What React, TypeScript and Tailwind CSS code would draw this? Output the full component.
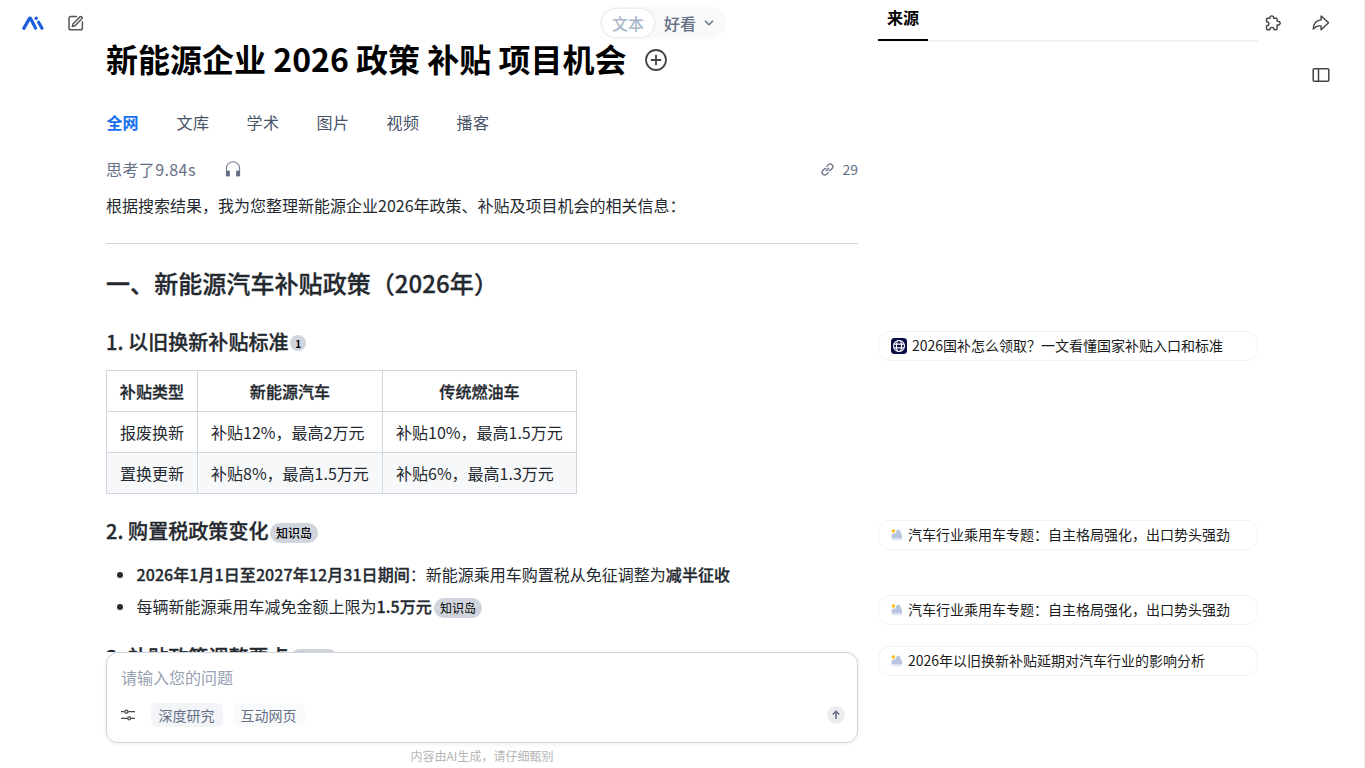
import type { ReactNode } from 'react';

const tabs = ['全网', '文库', '学术', '图片', '视频', '播客'];

const rows = [
  ['报废换新', '补贴12%，最高2万元', '补贴10%，最高1.5万元'],
  ['置换更新', '补贴8%，最高1.5万元', '补贴6%，最高1.3万元'],
];

function Logo() {
  return (
    <svg width="24" height="16" viewBox="0 0 24 16" fill="none" stroke="#1b5fdc" strokeWidth="3.2" strokeLinecap="round" strokeLinejoin="round">
      <path d="M2.8 13.4 8.4 3.6Q9 2.6 9.6 3.6L14.6 13.2" />
      <path d="M17.6 7.2 21 13.2" />
      <circle cx="15.2" cy="3.2" r="1.7" fill="#1b5fdc" stroke="none" />
    </svg>
  );
}

function ComposeIcon() {
  return (
    <svg width="16" height="16" viewBox="0 0 16 16" fill="none" stroke="#555" strokeWidth="1.5" strokeLinecap="round" strokeLinejoin="round">
      <path d="M8.5 1.5H2.8A1.8 1.8 0 0 0 1 3.3V13A1.8 1.8 0 0 0 2.8 14.8H12.6A1.8 1.8 0 0 0 14.4 13V7" />
      <path d="M4.4 11.6 5.1 8.8 12 1.9Q12.8 1.1 13.8 2T13.9 3.8L7 10.8Z" />
    </svg>
  );
}

function PlusIcon() {
  return (
    <svg width="24" height="24" viewBox="0 0 24 24" fill="none" stroke="#444" strokeWidth="1.8" strokeLinecap="round">
      <circle cx="12" cy="12" r="10" />
      <path d="M12 7.5V16.5M7.5 12H16.5" />
    </svg>
  );
}

function HeadphoneIcon() {
  return (
    <svg width="16" height="16" viewBox="0 0 16 16" fill="none">
      <path d="M1.4 12V7.4A6.6 6.6 0 0 1 14.6 7.4V12" stroke="#7c8596" strokeWidth="1.1" />
      <rect x=".9" y="9.4" width="4" height="6.2" rx="1.3" fill="#667085" />
      <rect x="11.1" y="9.4" width="4" height="6.2" rx="1.3" fill="#667085" />
    </svg>
  );
}

function LinkIcon() {
  return (
    <svg width="13" height="13" viewBox="0 0 14 14" fill="none" stroke="#667085" strokeWidth="1.4" strokeLinecap="round">
      <path d="M6.2 3.6 7.8 2A2.5 2.5 0 0 1 12 5.9L10.4 7.6A2.4 2.4 0 0 1 8.8 8.3" />
      <path d="M7.8 10.4 6.2 12A2.5 2.5 0 0 1 2 8.1L3.6 6.4A2.4 2.4 0 0 1 5.2 5.7" />
      <path d="M5.6 8.4 8.4 5.6" />
    </svg>
  );
}

function PuzzleIcon() {
  return (
    <svg width="16" height="16" viewBox="0 0 16 16" fill="none" stroke="#444" strokeWidth="1.4" strokeLinejoin="round">
      <path d="M2.6 3.2H5C4.8 1.7 5.5 .9 6.8 .9S8.8 1.7 8.6 3.2H11.2Q12.1 3.2 12.1 4.1V6.2C14 6 15.2 6.8 15.2 8.1S14 10.2 12.1 10V13.8Q12.1 14.7 11.2 14.7H9.2C9.2 13.2 8.4 12.4 7 12.4S4.8 13.2 4.8 14.7H2.6Q1.5 14.7 1.5 13.6V10.6C3.2 10.6 3.9 9.9 3.9 8.7S3.2 6.8 1.5 6.8V4.3Q1.5 3.2 2.6 3.2Z" />
    </svg>
  );
}

function ShareIcon() {
  return (
    <svg width="18" height="16" viewBox="0 0 18 16" fill="none" stroke="#444" strokeWidth="1.4" strokeLinejoin="round">
      <path d="M9.1 1 16.6 7.8 9.1 14.7V11C5.9 10.6 3.2 11.5 1.2 14.1 1.5 9 4.2 5.3 9.1 4.9Z" />
    </svg>
  );
}

function PanelIcon() {
  return (
    <svg width="18" height="14" viewBox="0 0 18 14" fill="none" stroke="#444" strokeWidth="1.5">
      <rect x="1.2" y=".8" width="15.6" height="12.4" rx="1" />
      <path d="M6.5 1V13" />
    </svg>
  );
}

function SlidersIcon() {
  return (
    <svg width="14" height="12" viewBox="0 0 14 12" fill="none" stroke="#4a4a4a" strokeWidth="1.3">
      <path d="M0 2.7H3.6M7.2 2.7H14M0 9.3H6.4M10 9.3H14" />
      <circle cx="5.4" cy="2.7" r="1.5" />
      <circle cx="8.2" cy="9.3" r="1.5" />
    </svg>
  );
}

function GlobeIcon() {
  return (
    <svg width="16" height="16" viewBox="0 0 16 16" fill="none" className="shrink-0">
      <rect width="16" height="16" rx="3.5" fill="#080d45" />
      <g stroke="#fff" strokeWidth="1.1">
        <circle cx="8" cy="8" r="5.5" />
        <ellipse cx="8" cy="8" rx="2.6" ry="5.5" />
        <path d="M2.8 6.1H13.2M2.8 9.9H13.2" />
      </g>
    </svg>
  );
}

function CloudIcon() {
  return (
    <svg width="12" height="12" viewBox="0 0 12 12" className="shrink-0">
      <circle cx="2.4" cy="2" r="1.8" fill="#fbbc1c" />
      <path d="M.6 9.6V6.4Q.6 4.6 2.4 4.4H4.4L5.6 1.6Q7.2 -.4 9 1.4L11 6.5V9.6Z" fill="#b7c5df" />
      <path d="M.8 9.6H11V11.2H.8Z" fill="#dde5f2" />
    </svg>
  );
}

function Strong({ children }: { children: ReactNode }) {
  return <b className="font-medium tracking-[0.07px] [-webkit-text-stroke:0.3px_currentColor]">{children}</b>;
}

function Badge({ children }: { children: ReactNode }) {
  return (
    <span className="flex h-5 items-center rounded-full bg-[#d0d5dd] px-1.5 text-[12px] leading-5 text-black">{children}</span>
  );
}

function SubHeading({ children }: { children: ReactNode }) {
  return <h3 className="text-[20px] leading-[30px]"><Strong>{children}</Strong></h3>;
}

function SourceCard({ icon, title, className }: { icon: ReactNode; title: string; className: string }) {
  return (
    <div className={`flex h-[30px] items-center gap-[5px] rounded-xl border border-[#f2f2f4] pl-3 text-[14px] text-[#1a1a1a] ${className}`}>
      {icon}
      <span className="whitespace-nowrap pb-0.5 leading-5">{title}</span>
    </div>
  );
}

export default function App() {
  return (
    <div className="flex h-[768px] w-[1365px] overflow-hidden border-r border-[#efefef] bg-white font-['Noto_Sans_CJK_SC',sans-serif] text-[16px] text-[#24292f]">
      <nav className="flex w-[106px] shrink-0 items-start gap-[22.5px] pl-[21px] pt-[15px]">
        <Logo />
        <ComposeIcon />
      </nav>

      <main className="flex w-[752px] shrink-0 flex-col">
        <div className="h-[652px] overflow-hidden">
          <div className="flex h-[39px] items-end pl-[494px]">
            <div className="flex h-8 w-[126px] items-center rounded-full bg-[#f9f9fa] pl-[2px] text-[#667085]">
              <span className="flex h-7 w-[52px] items-center justify-center rounded-full bg-white font-medium text-[#a9b6c9] shadow-[0_0_3px_rgba(0,0,0,0.14)]">文本</span>
              <span className="ml-[10px] font-medium">好看</span>
              <svg width="10" height="6" viewBox="0 0 10 6" fill="none" stroke="#667085" strokeWidth="1.4" className="ml-2"><path d="M1 .8 5 4.8 9 .8" /></svg>
            </div>
          </div>

          <div className="flex h-[42px] items-center gap-[17.5px]">
            <h1 className="whitespace-nowrap pb-1 text-[32px] font-bold leading-[38px] text-black">新能源企业 2026 政策 补贴 项目机会</h1>
            <PlusIcon />
          </div>

          <div className="mt-[29px] flex h-6 items-center gap-[37px] pl-[0.5px] text-[#475467]">
            {tabs.map((tab, i) => (
              <span key={tab} className={i === 0 ? 'w-[33px] font-bold text-[#1570ef]' : 'w-[33px] tracking-[0.5px]'}>{tab}</span>
            ))}
          </div>

          <div className="mt-[23px] flex h-6 items-center text-[#667085]">
            <span className="w-[119px] tracking-[0.4px]">思考了9.84s</span>
            <HeadphoneIcon />
            <div className="ml-auto flex items-center gap-[8.5px] text-[14px]">
              <LinkIcon />
              <span>29</span>
            </div>
          </div>

          <p className="mt-3 leading-6">根据搜索结果，我为您整理新能源企业2026年政策、补贴及项目机会的相关信息：</p>
          <hr className="mt-[26px] border-[#d0d7de]" />

          <h2 className="mt-[21px] text-[24px] leading-9"><Strong>一、新能源汽车补贴政策（2026年）</Strong></h2>

          <div className="mt-[26px] flex h-[30px] items-center gap-[1.5px]">
            <SubHeading>1. 以旧换新补贴标准</SubHeading>
            <span className="mt-[2px] flex size-4 items-center justify-center rounded-full bg-[#d0d5dd] text-[10px] font-bold text-black">1</span>
          </div>

          <table className="mt-[13px] w-[471px] table-fixed border-collapse">
            <colgroup>
              <col className="w-[91px]" />
              <col className="w-[185px]" />
              <col className="w-[194px]" />
            </colgroup>
            <thead>
              <tr className="h-[41px]">
                {['补贴类型', '新能源汽车', '传统燃油车'].map((h) => (
                  <th key={h} className="border border-[#d0d7de] p-0 font-medium"><Strong>{h}</Strong></th>
                ))}
              </tr>
            </thead>
            <tbody>
              {rows.map((row) => (
                <tr key={row[0]} className="h-[41px] even:bg-[#f6f8fa]">
                  {row.map((cell) => (
                    <td key={cell} className="whitespace-nowrap border border-[#d0d7de] py-0 pl-[13px] pr-0">{cell}</td>
                  ))}
                </tr>
              ))}
            </tbody>
          </table>

          <div className="mt-[22px] flex h-[30px] items-center gap-[1.5px]">
            <SubHeading>2. 购置税政策变化</SubHeading>
            <div className="mt-1 font-medium"><Badge>知识岛</Badge></div>
          </div>

          <ul className="mt-4 flex flex-col gap-2">
            <li className="flex h-6 items-center">
              <span className="ml-[11px] mr-[13.5px] mt-px size-1.5 rounded-full bg-[#24292f]" />
              <span><Strong>2026年1月1日至2027年12月31日期间</Strong>：新能源乘用车购置税从免征调整为<Strong>减半征收</Strong></span>
            </li>
            <li className="flex h-6 items-center">
              <span className="ml-[11px] mr-[13.5px] mt-px size-1.5 rounded-full bg-[#24292f]" />
              <span className="mr-[2px]">每辆新能源乘用车减免金额上限为<Strong>1.5万元</Strong></span>
              <div className="mt-1"><Badge>知识岛</Badge></div>
            </li>
          </ul>

          <div className="mt-6 flex h-[30px] items-center gap-[1.5px]">
            <SubHeading>3. 补贴政策调整要点</SubHeading>
            <div className="mt-1 font-medium"><Badge>知识岛</Badge></div>
          </div>
        </div>

        <section className="flex h-[91px] shrink-0 flex-col rounded-xl border border-[#d0d5dd] bg-white px-[14px] shadow-[0_1px_4px_rgba(16,24,40,0.08)]">
          <div className="mt-3 h-6 leading-6 text-[#98a2b3]">请输入您的问题</div>
          <div className="mt-[14px] flex h-6 items-center text-[14px] text-[#667085]">
            <SlidersIcon />
            <span className="ml-4 flex h-6 w-[72px] items-center justify-center rounded-md bg-[#f2f4f7] pr-px">深度研究</span>
            <span className="ml-[10px] flex h-6 w-[72px] items-center justify-center rounded-md bg-[#f9fafb] pr-px">互动网页</span>
            <span className="ml-auto mr-[-2px] flex size-[18px] items-center justify-center rounded-full bg-[#eaecf0]">
              <svg width="8" height="10" viewBox="0 0 8 10" fill="none" stroke="#667085" strokeWidth="1.6"><path d="M4 9V1.5M.8 4.5 4 1.3 7.2 4.5" /></svg>
            </span>
          </div>
        </section>
        <p className="mt-1 text-center text-[12px] leading-[18px] text-[#b5b5b5]">内容由AI生成，请仔细甄别</p>
      </main>

      <aside className="ml-5 w-[380px] shrink-0">
        <div className="flex h-[42px] items-start border-b-2 border-[#f2f2f5]">
          <div className="-mb-px flex h-[41px] w-[50px] shrink-0 justify-center border-b-2 border-black pt-[5px] font-bold leading-6 text-black">来源</div>
        </div>
        <SourceCard className="mt-[289px]" icon={<GlobeIcon />} title="2026国补怎么领取？一文看懂国家补贴入口和标准" />
        <SourceCard className="mt-[159px]" icon={<CloudIcon />} title="汽车行业乘用车专题：自主格局强化，出口势头强劲" />
        <SourceCard className="mt-[45px]" icon={<CloudIcon />} title="汽车行业乘用车专题：自主格局强化，出口势头强劲" />
        <SourceCard className="mt-[21px]" icon={<CloudIcon />} title="2026年以旧换新补贴延期对汽车行业的影响分析" />
      </aside>

      <div className="ml-[6px] flex w-[66px] flex-col items-end gap-[37px] pt-[15px]">
        <div className="flex items-center gap-[31.5px]">
          <PuzzleIcon />
          <ShareIcon />
        </div>
        <PanelIcon />
      </div>
    </div>
  );
}
